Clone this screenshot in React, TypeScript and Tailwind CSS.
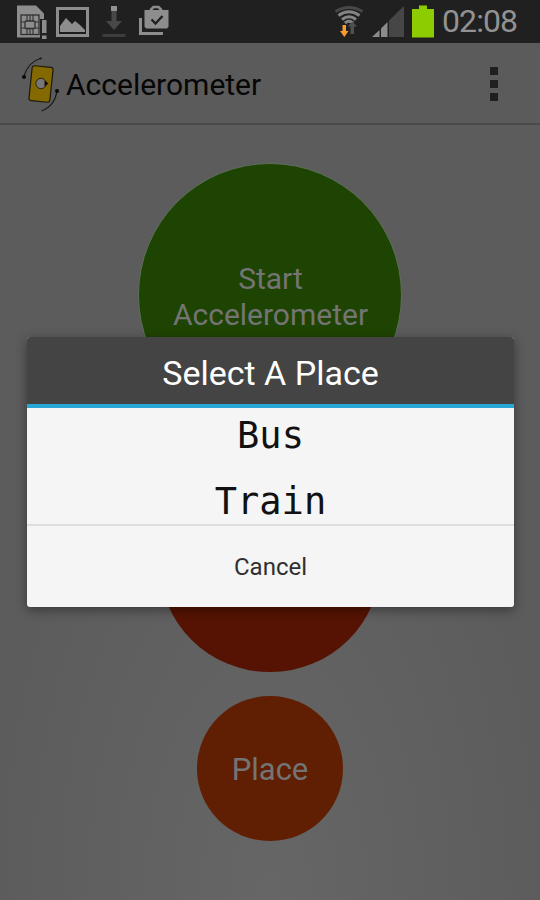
import * as React from 'react';

const StatusLeft = () => (
  <div className="flex items-start pl-[17px] pt-[5px]">
    {/* sim card */}
    <svg width="31" height="34" viewBox="0 0 31 34">
      <path d="M0 .5h19l8 8v24H0z" fill="#8d8d8d" />
      <rect x="4" y="10" width="18" height="19.500" fill="none" stroke="#303030" strokeWidth="1.3" />
      <rect x="8" y="16" width="10" height="7.500" rx="1" fill="none" stroke="#303030" strokeWidth="1.3" />
      <path d="M10 10v6M13 10v6M16 10v6M10 23.500v6M13 23.500v6M16 23.500v6M4 17h4M4 23h4M18 17h4M18 23h4" stroke="#303030" strokeWidth="1.100" />
      <path d="M23 14h7.500v20H23z" fill="#202020" />
      <path d="M25 15h4.500v13H25zM25 30.500h4.500V34H25z" fill="#8d8d8d" />
    </svg>
    {/* picture */}
    <svg width="34" height="32" viewBox="0 0 34 32" className="ml-[8px] mt-[2px]">
      <rect x="1.500" y="1.500" width="30" height="27" fill="#1c1c1c" stroke="#8d8d8d" strokeWidth="3" />
      <path d="M4 25v-6l6-8 6 6 3-3 5 4 5 5v2z" fill="#8d8d8d" />
    </svg>
    {/* download */}
    <svg width="25" height="34" viewBox="0 0 25 34" className="ml-[12px]">
      <path d="M9.500 6h5v10h5.500l-8 9-8-9h5.500z" fill="#484848" />
      <rect x="9" y="1" width="6" height="5" fill="#929292" />
      <rect x="0.500" y="29" width="23" height="3" fill="#3d3d3d" />
    </svg>
    {/* play store bag */}
    <svg width="31" height="32" viewBox="0 0 31 32" className="ml-[12px]">
      <path d="M1.500 13v15.500H24" fill="none" stroke="#8d8d8d" strokeWidth="3" />
      <path d="M12 7V4.500L14.500 2h5L22 4.500V7" fill="none" stroke="#8d8d8d" strokeWidth="2.600" />
      <path d="M5.500 5h24v16.500l-1.500 2H7l-1.500-2z" fill="#8d8d8d" />
      <path d="m12.500 14.500 4 4 7-7.500" fill="none" stroke="#202020" strokeWidth="2.400" />
    </svg>
  </div>
);

const StatusRight = () => (
  <div className="flex items-start pt-[5px]">
    {/* wifi with traffic arrows */}
    <svg width="30" height="33" viewBox="0 0 30 33">
      <g fill="none" strokeWidth="3">
        <path d="M1.500 6.500Q15-1.500 28.500 6.500" stroke="#484848" />
        <path d="M4.500 10.500Q15 3 25.500 10.500" stroke="#858585" />
        <path d="M8 14.500Q15 9 22 14.500" stroke="#858585" />
        <path d="M11 18Q15 14.500 19 18" stroke="#858585" />
      </g>
      <path d="M18.500 16.500l4.500 5h-3v7.500h-3.500v-7.500h-3z" fill="#505050" />
      <path d="M8.500 20h3.500v6h2.500l-4.200 6L6 26h2.500z" fill="#f79a32" />
    </svg>
    {/* signal */}
    <svg width="33" height="33" viewBox="0 0 33 33" className="ml-[8px]">
      <path d="M0 32 7.500 25v7z" fill="#8b8b8b" />
      <path d="M9 23.500 15.500 17v15H9z" fill="#8b8b8b" />
      <path d="M17 15.500 32 1v31H17z" fill="#464646" />
    </svg>
    {/* battery */}
    <svg width="22" height="33" viewBox="0 0 22 33" className="ml-[7px]">
      <path d="M7 .5h8V4h7v28.500H0V4h7z" fill="#8ccc00" />
    </svg>
    <span className="ml-[8px] mr-[22px] mt-[-4px] w-[76px] whitespace-nowrap text-[32px] leading-[40px] tracking-[-0.9px] text-[#929292]">
      02:08
    </span>
  </div>
);

const AppIcon = () => (
  <svg width="40" height="58" viewBox="0 0 40 58" className="ml-[20px]">
    <g transform="rotate(6 21 29)">
      <rect x="10.500" y="11.500" width="21" height="35" rx="2.500" fill="#846900" stroke="#1d1a08" strokeWidth="1.200" />
    </g>
    <circle cx="21" cy="28.500" r="5.200" fill="#777" stroke="#2b2508" strokeWidth="1" />
    <path d="M24.500 25.500 28.500 28.500l-4 3z" fill="#160808" />
    <path d="M4 21Q8 7 21.500 3M37 35.500Q35 51 21.500 56" fill="none" stroke="#1b1b1b" strokeWidth="1.300" />
    <circle cx="4" cy="22" r="2" fill="#080808" />
    <circle cx="37" cy="36" r="2" fill="#080808" />
    <circle cx="20.500" cy="3.500" r="1.100" fill="#181818" />
  </svg>
);

const App = () => {
  const [open, setOpen] = React.useState(true);
  const places: string[] = ['Bus', 'Train'];

  return (
    <div className="relative flex h-[900px] w-[540px] flex-col overflow-hidden bg-[#5c5c5c] bg-[radial-gradient(ellipse_280px_560px_at_50%_100%,#666666,#5c5c5c)] font-['Roboto',sans-serif]">
      <div className="flex h-[43px] shrink-0 justify-between bg-[#202020]">
        <StatusLeft />
        <StatusRight />
      </div>

      <header className="flex h-[82px] shrink-0 items-center border-b-2 border-[#4a4a4a] bg-[#5b5b5b] pt-[2px]">
        <AppIcon />
        <h1 className="ml-[6px] whitespace-nowrap text-[30px] text-[#060606]">Accelerometer</h1>
        <div className="ml-auto mr-[42px] flex flex-col gap-[5px]">
          <span className="h-2 w-2 bg-[#202020]" />
          <span className="h-2 w-2 bg-[#202020]" />
          <span className="h-2 w-2 bg-[#202020]" />
        </div>
      </header>

      <main className="flex flex-col items-center gap-6 pt-[38px] text-[30px] leading-9 text-[#747474]">
        <button className="h-[264px] w-[264px] shrink-0 rounded-full border border-[#5c6f59] bg-[#1e4403] pt-1 pl-px">
          Start
          <br />
          Accelerometer
        </button>
        <button className="h-[221px] w-[222px] shrink-0 rounded-full bg-[#561303]" onClick={() => setOpen(true)} />
        <button className="h-[145px] w-[146px] shrink-0 rounded-full bg-[#601f03] pt-[3px] text-[31px]" onClick={() => setOpen(true)}>
          Place
        </button>
      </main>

      {open && (
        <div className="absolute left-[27px] top-[337px] flex h-[270px] w-[487px] flex-col overflow-hidden rounded-[3px] bg-[#f5f5f5] text-center shadow-[0_3px_12px_rgba(0,0,0,0.4)]">
          <h2 className="h-[71px] shrink-0 border-b-4 border-[#29a8d8] bg-[#444444] pt-[15px] text-[34px] leading-[42px] text-white">
            Select A Place
          </h2>
          <ul className="flex h-[117px] shrink-0 flex-col pt-px font-['DejaVu_Sans_Mono',monospace] text-[37px] text-[#111111]">
            {places.map((place) => (
              <li key={place} className="h-[66px] shrink-0 leading-[54px]">
                {place}
              </li>
            ))}
          </ul>
          <button
            className="-mt-px flex-1 border-t-2 border-[#dedede] text-[24px] text-[#303030]"
            onClick={() => setOpen(false)}
          >
            Cancel
          </button>
        </div>
      )}
    </div>
  );
};

export default App;
